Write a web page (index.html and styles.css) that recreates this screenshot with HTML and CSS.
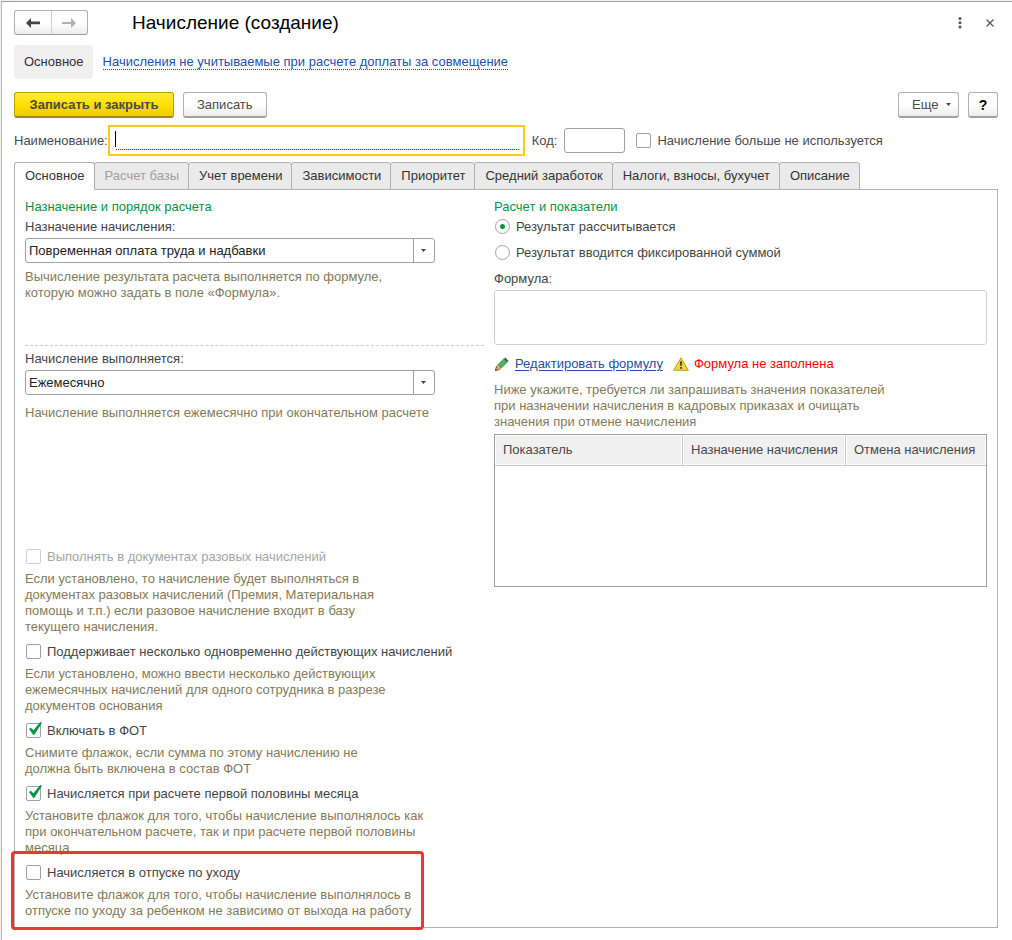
FILE: index.html
```html
<!DOCTYPE html>
<html lang="ru">
<head>
    <meta charset="UTF-8">
    <meta name="viewport" content="width=device-width, initial-scale=1.0">
    <title>Начисление (создание)</title>
    <link rel="stylesheet" href="styles.css">
</head>
<body>
    <div class="window">
        <header class="title-bar">
            <div class="history">
                <button type="button" aria-label="Назад">
                    <svg width="14" height="10" viewBox="0 0 14 10"><path d="M5 0v3.6h9v2.6H5V10L0 5z" fill="#444"/></svg>
                </button>
                <button type="button" aria-label="Вперед" disabled>
                    <svg width="14" height="10" viewBox="0 0 14 10"><path d="M9 0v4H0v2h9v4l5-5z" fill="#b0b0b0"/></svg>
                </button>
            </div>
            <h1>Начисление (создание)</h1>
            <button type="button" class="icon-button" aria-label="Меню">
                <svg width="4" height="12" viewBox="0 0 4 12" fill="#555"><circle cx="2" cy="1.6" r="1.5"/><circle cx="2" cy="5.8" r="1.5"/><circle cx="2" cy="10" r="1.5"/></svg>
            </button>
            <button type="button" class="icon-button" aria-label="Закрыть">
                <svg width="8" height="8" viewBox="0 0 8 8"><path d="M.5.5l7 7M7.5.5l-7 7" stroke="#555" stroke-width="1.2"/></svg>
            </button>
        </header>

        <nav class="sections">
            <a class="current" href="#">Основное</a>
            <a class="link" href="#">Начисления не учитываемые при расчете доплаты за совмещение</a>
        </nav>

        <div class="toolbar">
            <button type="button" class="btn btn-primary">Записать и закрыть</button>
            <button type="button" class="btn">Записать</button>
            <button type="button" class="btn btn-more">Еще <span class="arrow"></span></button>
            <button type="button" class="btn btn-help">?</button>
        </div>

        <div class="name-row">
            <label for="name">Наименование:</label>
            <div class="name-field"><span class="caret"></span><input type="text" id="name"></div>
            <label for="code" class="code-label">Код:</label>
            <input type="text" id="code" class="code">
            <label class="check"><input type="checkbox">Начисление больше не используется</label>
        </div>

        <div class="tabs" role="tablist">
            <button type="button" role="tab" class="active" aria-selected="true">Основное</button>
            <button type="button" role="tab" disabled>Расчет базы</button>
            <button type="button" role="tab">Учет времени</button>
            <button type="button" role="tab">Зависимости</button>
            <button type="button" role="tab">Приоритет</button>
            <button type="button" role="tab">Средний заработок</button>
            <button type="button" role="tab">Налоги, взносы, бухучет</button>
            <button type="button" role="tab">Описание</button>
        </div>

        <main class="panel">
            <section class="left">
                <div class="purpose">
                    <h2>Назначение и порядок расчета</h2>
                    <label for="purpose">Назначение начисления:</label>
                    <div class="select">
                        <select id="purpose"><option>Повременная оплата труда и надбавки</option></select>
                        <span class="arrow"></span>
                    </div>
                    <p class="hint">Вычисление результата расчета выполняется по формуле,<br>которую можно задать в поле «Формула».</p>
                </div>
                <div class="period">
                    <label for="period">Начисление выполняется:</label>
                    <div class="select">
                        <select id="period"><option>Ежемесячно</option></select>
                        <span class="arrow"></span>
                    </div>
                    <p class="hint">Начисление выполняется ежемесячно при окончательном расчете</p>
                </div>
                <div class="options">
                    <div class="option">
                        <label class="check"><input type="checkbox" disabled>Выполнять в документах разовых начислений</label>
                        <p class="hint">Если установлено, то начисление будет выполняться в<br>документах разовых начислений (Премия, Материальная<br>помощь и т.п.) если разовое начисление входит в базу<br>текущего начисления.</p>
                    </div>
                    <div class="option">
                        <label class="check"><input type="checkbox">Поддерживает несколько одновременно действующих начислений</label>
                        <p class="hint">Если установлено, можно ввести несколько действующих<br>ежемесячных начислений для одного сотрудника в разрезе<br>документов основания</p>
                    </div>
                    <div class="option">
                        <label class="check"><input type="checkbox" checked>Включать в ФОТ</label>
                        <p class="hint">Снимите флажок, если сумма по этому начислению не<br>должна быть включена в состав ФОТ</p>
                    </div>
                    <div class="option">
                        <label class="check"><input type="checkbox" checked>Начисляется при расчете первой половины месяца</label>
                        <p class="hint">Установите флажок для того, чтобы начисление выполнялось как<br>при окончательном расчете, так и при расчете первой половины<br>месяца</p>
                    </div>
                    <div class="option highlighted">
                        <label class="check"><input type="checkbox">Начисляется в отпуске по уходу</label>
                        <p class="hint">Установите флажок для того, чтобы начисление выполнялось в<br>отпуске по уходу за ребенком не зависимо от выхода на работу</p>
                    </div>
                </div>
            </section>

            <section class="right">
                <h2>Расчет и показатели</h2>
                <div class="radios">
                    <label class="check"><input type="radio" name="result" checked>Результат рассчитывается</label>
                    <label class="check"><input type="radio" name="result">Результат вводится фиксированной суммой</label>
                </div>
                <label for="formula">Формула:</label>
                <textarea id="formula" readonly></textarea>
                <div class="formula-row">
                    <svg width="15" height="14" viewBox="-1 0 15 14">
                        <path d="M.5 13.5l1-4.5L4.800 12.500z" fill="#f0b562" stroke="#5a4632" stroke-width=".8"/>
                        <path d="M2.500 8L8.700 1.900l3.400 3.400L5.900 11.500z" fill="#4cb55c" stroke="#2c7440" stroke-width=".6"/>
                        <path d="M1.600 9l.9-1 3.400 3.500-1 1z" fill="#f0b562"/>
                        <path d="M8.700 1.900L10.300.4l3.300 3.300-1.500 1.600z" fill="#4d5870"/>
                        <path d="M.2 13.800l.4-2 1.500 1.500z" fill="#333"/>
                    </svg>
                    <a class="edit" href="#">Редактировать формулу</a>
                    <svg width="16" height="14" viewBox="0 0 16 14">
                        <path d="M8 .8L15.300 13.300H.7z" fill="#f5d436" stroke="#b99a28" stroke-linejoin="round"/>
                        <path d="M7 4.500h2l-.4 4.500H7.400zM7.100 10h1.800v1.800H7.100z" fill="#333"/>
                    </svg>
                    <span class="error">Формула не заполнена</span>
                </div>
                <p class="hint">Ниже укажите, требуется ли запрашивать значения показателей<br>при назначении начисления в кадровых приказах и очищать<br>значения при отмене начисления</p>
                <div class="table-box">
                    <table>
                        <thead>
                            <tr>
                                <th>Показатель</th>
                                <th class="col-assign">Назначение начисления</th>
                                <th class="col-cancel">Отмена начисления</th>
                            </tr>
                        </thead>
                        <tbody></tbody>
                    </table>
                </div>
            </section>
        </main>
    </div>
</body>
</html>
```
FILE: styles.css
```css
* {
    box-sizing: border-box;
}

body {
    margin: 0;
    padding: 1px 0 0 1px;
    background: #f0f0ea;
    color: #4a4a4a;
    font: 13px/16px "Liberation Sans", Arial, sans-serif;
}

button,
input,
select,
textarea {
    font: inherit;
    color: inherit;
    margin: 0;
}

h1,
h2,
p {
    margin: 0;
    font-size: 13px;
    font-weight: normal;
}

.window {
    min-height: calc(100vh - 1px);
    border-top: 1px solid #a0a0a0;
    border-left: 1px solid #c8bc7c;
    padding: 8px 14px 12px 12px;
    background: #fff;
}

/* Заголовок */
.title-bar {
    display: flex;
    align-items: center;
    height: 25px;
}

.history {
    display: flex;
    width: 74px;
    height: 25px;
    border: 1px solid #b0b0b0;
    border-bottom-color: #999;
    border-radius: 3px;
    background: linear-gradient(#fff 50%, #ececec);
}

.history button {
    flex: 1;
    display: flex;
    align-items: center;
    justify-content: center;
    padding: 0;
    border: none;
    background: none;
}

.history button + button {
    border-left: 1px solid #d0d0d0;
}

h1 {
    flex: 1;
    margin-left: 44px;
    font-size: 19px;
    line-height: 24px;
    color: #000;
}

.icon-button {
    display: flex;
    align-items: center;
    justify-content: center;
    width: 30px;
    height: 20px;
    padding: 0;
    border: none;
    background: none;
}

.icon-button:last-child {
    width: 16px;
    margin-left: 7px;
}

/* Навигация */
.sections {
    display: flex;
    align-items: center;
    gap: 10px;
    margin-top: 10px;
}

.sections .current {
    padding: 9px;
    padding-left: 10px;
    border-radius: 3px;
    background: #f0f0f0;
    color: #333;
    text-decoration: none;
}

.sections .link {
    padding-top: 1px;
    color: #1d50a8;
    line-height: 14px;
    text-decoration: none;
    border-bottom: 1px dotted #1d50a8;
}

/* Кнопки */
.toolbar {
    display: flex;
    gap: 9px;
    margin-top: 13px;
}

.btn {
    height: 26px;
    padding: 0 13px;
    border: 1px solid #b0b0b0;
    border-bottom: 2px solid #a0a0a0;
    border-radius: 3px;
    background: linear-gradient(#fff 50%, #ececec);
}

.btn-primary {
    min-width: 160px;
    border-color: #b9a000;
    border-bottom-color: #a08c00;
    background: linear-gradient(#ffec3d, #ffe000 50%, #eccb00);
    font-weight: bold;
}

.btn-more {
    display: flex;
    align-items: center;
    justify-content: space-between;
    min-width: 61px;
    margin-left: auto;
    padding: 0 7px 0 13px;
}

.btn-help {
    width: 30px;
    padding: 0;
    color: #000;
    font-size: 14px;
    font-weight: bold;
}

.arrow {
    width: 5px;
    height: 3px;
    background: #444;
    clip-path: polygon(0 0, 100% 0, 50% 100%);
}

/* Наименование и код */
.name-row {
    display: flex;
    align-items: center;
    height: 31px;
    margin-top: 7px;
}

.name-field {
    display: flex;
    flex: 1;
    max-width: 417px;
    height: 31px;
    padding: 4px;
    padding-left: 5px;
    border: 2px solid #fbc91c;
    background: #fff;
}

.name-field input {
    flex: 1;
    min-width: 0;
    height: 19px;
    padding: 0;
    border: none;
    border-bottom: 1px dotted #e00000;
    outline: none;
}

.caret {
    width: 1px;
    height: 16px;
    background: #000;
}

.code-label {
    margin-left: 7px;
}

.code {
    width: 61px;
    height: 25px;
    margin: 0 10px 0 7px;
    border: 1px solid #a0a0a0;
    border-radius: 3px;
}

.check {
    display: flex;
    align-items: flex-start;
    gap: 6px;
    height: 16px;
}

.check input {
    position: relative;
    flex: none;
    appearance: none;
    width: 15px;
    height: 15px;
    margin-left: 1px;
    border: 1px solid #a0a0a0;
    border-radius: 2px;
    background: #fff;
}

.check input[type="radio"] {
    border-radius: 50%;
}

.check input[type="radio"]:checked {
    background: radial-gradient(circle, #009646 2px, #fff 3px);
}

.check input[type="checkbox"]:checked::after {
    content: "";
    position: absolute;
    top: -2px;
    left: 2px;
    width: 13px;
    height: 13px;
    background: #009646;
    clip-path: polygon(0 54%, 14% 44%, 34% 64%, 86% 0, 100% 6%, 42% 98%, 32% 98%);
}

.check input:disabled {
    border-color: #d0d0d0;
}

/* Закладки */
.tabs {
    display: flex;
    margin-top: 6px;
}

.tabs button {
    height: 28px;
    margin-left: -1px;
    padding: 0 9px 0 10px;
    border: 1px solid #b0b0b0;
    border-radius: 3px 3px 0 0;
    background: #eaeaea;
    color: #333;
    white-space: nowrap;
}

.tabs button:disabled {
    color: #a0a0a0;
}

.tabs .active {
    position: relative;
    margin-left: 0;
    border-bottom-color: #fff;
    background: #fff;
}

.panel {
    display: flex;
    gap: 10px;
    margin-top: -1px;
    padding: 9px 10px 8px;
    border: 1px solid #b0b0b0;
}

.left {
    flex: 459;
}

.right {
    flex: 493;
}

.left label,
.right label {
    color: #444;
}

.left .check:has(input:disabled) {
    color: #a5a5a5;
}

h2 {
    margin-bottom: 4px;
    color: #009646;
}

.hint {
    color: #857a57;
}

.purpose {
    height: 147px;
    border-bottom: 1px dashed #ccc;
}

.period {
    height: 203px;
    padding-top: 5px;
}

.select {
    position: relative;
    max-width: 410px;
    margin: 3px 0 6px;
}

.period .select {
    margin-bottom: 10px;
}

.purpose label,
.period label {
    display: block;
}

.select select {
    display: block;
    appearance: none;
    width: 100%;
    height: 25px;
    padding: 0 24px 0 3px;
    border: 1px solid #a0a0a0;
    border-radius: 3px;
    background: #fff;
    color: #222;
}

.select::after {
    content: "";
    position: absolute;
    top: 0;
    right: 21px;
    width: 1px;
    height: 100%;
    background: #a0a0a0;
}

.select .arrow {
    position: absolute;
    top: 11px;
    right: 9px;
}

.options {
    display: flex;
    flex-direction: column;
    gap: 9px;
}

.options .hint {
    margin-top: 6px;
}

/* Красная рамка вокруг флажка */
.highlighted {
    position: relative;
}

.highlighted::after {
    content: "";
    position: absolute;
    top: -14px;
    bottom: -11px;
    left: -14px;
    width: 407px;
    border: 3px solid #e63a30;
    border-radius: 4px;
    pointer-events: none;
}

/* Расчет и показатели */
.radios {
    display: flex;
    flex-direction: column;
    gap: 10px;
    margin-bottom: 10px;
}

textarea {
    display: block;
    width: 100%;
    height: 55px;
    margin-top: 3px;
    border: 1px solid #d0d0d0;
    border-radius: 3px;
    resize: none;
}

.formula-row {
    display: flex;
    align-items: center;
    gap: 6px;
    margin: 11px 0 10px;
}

.edit {
    margin-right: 4px;
    color: #1d50a8;
    text-underline-offset: 2px;
}

.error {
    margin-left: -1px;
    color: #f00;
}

.table-box {
    height: 153px;
    margin-top: 4px;
    border: 1px solid #a0a0a0;
}

table {
    width: 100%;
    table-layout: fixed;
    border-collapse: separate;
    border-spacing: 0;
}

th {
    height: 31px;
    padding: 0 8px;
    border-right: 1px solid #ccc;
    border-bottom: 1px solid #ccc;
    background: #f0f0f0;
    box-shadow: inset 0 0 0 1px #fff;
    font-weight: normal;
    text-align: left;
    white-space: nowrap;
}

th:last-child {
    border-right: none;
}

.col-assign {
    width: 163px;
}

.col-cancel {
    width: 140px;
}
```
